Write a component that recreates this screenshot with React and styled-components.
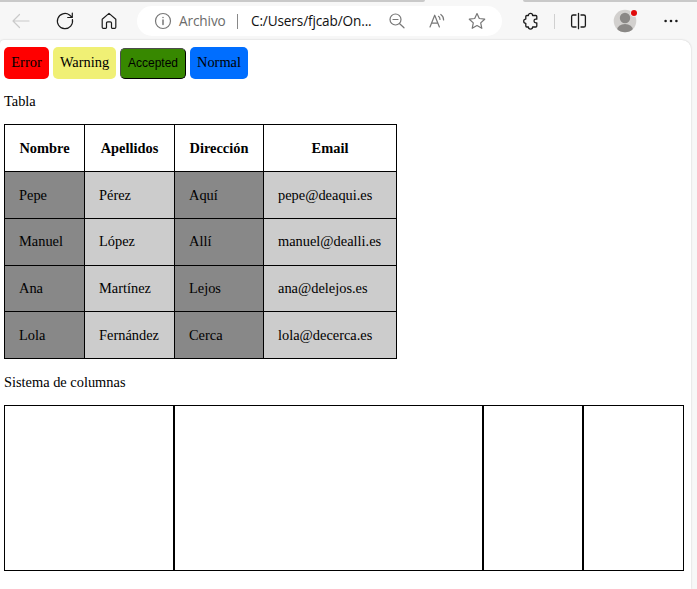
import React from "react";
import styled, { createGlobalStyle } from "styled-components";

const GlobalStyle = createGlobalStyle`
  * { box-sizing: border-box; }
  body { margin: 0; background: #f7f7f7; overflow: hidden; }
`;

const Window = styled.div`
  display: flex;
  flex-direction: column;
  width: 697px;
  height: 589px;
  background: #f7f7f7;
  overflow: hidden;
`;

const TabStrip = styled.div`
  display: flex;
  justify-content: space-between;
  height: 2px;
  flex: none;
`;

const InactiveTabs = styled.div`
  width: ${(p) => p.$width}px;
  background: #c9c9c9;
  border-radius: ${(p) => (p.$side === "left" ? "0 0 2px 0" : "0 0 0 2px")};
`;

const Toolbar = styled.header`
  display: flex;
  align-items: center;
  height: 38px;
  flex: none;
`;

const Icon = styled.svg`
  display: block;
  flex: none;
  width: 20px;
  height: 20px;
  margin-left: ${(p) => p.$gap || 0}px;
  fill: none;
  stroke: ${(p) => p.$color || "#1b1b1b"};
  stroke-width: ${(p) => p.$weight || 1.2};
  stroke-linecap: round;
  stroke-linejoin: round;
`;

const AddressBar = styled.div`
  display: flex;
  align-items: center;
  width: 365px;
  height: 30px;
  margin-left: 18px;
  border-radius: 15px;
  background: #fff;
  font: 13.6px/20px "Open Sans", "Noto Sans", sans-serif;
`;

const Scheme = styled.span`
  width: 58px;
  margin-left: 6px;
  color: #6b6b6b;
  letter-spacing: -0.1px;
  white-space: nowrap;
`;

const Address = styled.span`
  width: 123px;
  margin-left: 13px;
  color: #111;
  letter-spacing: -0.13px;
  white-space: nowrap;
`;

const Divider = styled.span`
  flex: none;
  width: 1px;
  height: 15px;
  margin-left: ${(p) => p.$gap || 0}px;
  background: ${(p) => p.$color};
`;

const Avatar = styled.svg`
  display: block;
  flex: none;
  width: 26px;
  height: 26px;
  margin-left: 24px;
`;

const Page = styled.main`
  width: 691px;
  flex: 1;
  padding: 7px 0 0 4px;
  border-top-left-radius: 4px;
  border-top-right-radius: 9px;
  background: #fff;
  box-shadow: 0 0 2px rgba(0, 0, 0, 0.2);
  color: #000;
  font: 14.4px/17px "Liberation Serif", "Times New Roman", serif;
`;

const Labels = styled.div`
  display: flex;
  align-items: flex-end;
  gap: 4px;
  height: 32px;
`;

const Label = styled.span`
  width: ${(p) => p.$width}px;
  height: 32px;
  padding-top: 7px;
  border-radius: 5px;
  background: ${(p) => p.$color};
  text-align: center;
`;

const AcceptedButton = styled.button`
  width: 66px;
  height: 31px;
  padding: 0 0 2px;
  border: 1px solid;
  border-color: #4c4c4c #000 #000 #4c4c4c;
  border-radius: 5px;
  background: #378800;
  color: #000;
  font: 12px/14px "Liberation Sans", Arial, sans-serif;
`;

const Heading = styled.p`
  height: 17px;
  margin: ${(p) => p.$top}px 0 14px;
`;

const Table = styled.table`
  width: 393px;
  table-layout: fixed;
  border-collapse: separate;
  border-spacing: 0;
  border: solid #000;
  border-width: 1px 0 0 1px;
`;

const Column = styled.col`
  width: ${(p) => p.$width}px;
`;

const Row = styled.tr`
  height: ${(p) => p.$height}px;
`;

const HeaderCell = styled.th`
  padding: 1px 0 0;
  border: solid #000;
  border-width: 0 1px 1px 0;
  font-weight: bold;
  text-align: center;
`;

const Cell = styled.td`
  padding: 14px 0 0 14px;
  border: solid #000;
  border-width: 0 1px 1px 0;
  vertical-align: top;

  tr:first-child > &, tr:last-child > & { padding-top: 15px; }
  &:nth-child(odd) { background: #888; }
  &:nth-child(even) { background: #ccc; }
`;

const Columns = styled.section`
  display: flex;
  height: 166px;
`;

const ColumnBox = styled.div`
  width: ${(p) => p.$width}px;
  border: 1px solid #000;
`;

const people = [
  ["Pepe", "Pérez", "Aquí", "pepe@deaqui.es", 47],
  ["Manuel", "López", "Allí", "manuel@dealli.es", 47],
  ["Ana", "Martínez", "Lejos", "ana@delejos.es", 46],
  ["Lola", "Fernández", "Cerca", "lola@decerca.es", 47],
];

function BrowserBar() {
  return (
    <Toolbar>
      <Icon $gap={11} $color="#cacaca" viewBox="0 0 20 20">
        <path d="M18 10H2M8.5 3.5 2 10l6.5 6.5" />
      </Icon>
      <Icon $gap={24} viewBox="0 0 20 20">
        <path d="M17.4 8.5A7.6 7.6 0 1 1 14.5 4L17 6.2M17.3 2v4.5h-4.6" />
      </Icon>
      <Icon $gap={24} viewBox="0 0 20 20">
        <path d="M3.2 8.2 10 2.4l6.8 5.8v8c0 .7-.4 1.1-1.1 1.1h-2.4c-.5 0-.8-.3-.8-.8V12c0-.7-.5-1.2-1.2-1.2H8.7c-.7 0-1.2.5-1.2 1.2v4.5c0 .5-.3.8-.8.8H4.3c-.7 0-1.1-.4-1.1-1.1z" />
      </Icon>
      <AddressBar>
        <Icon $gap={16} $color="#777" viewBox="0 0 20 20">
          <circle cx="10" cy="10" r="7.5" />
          <path d="M10 9v4.5M10 6.4v.2" strokeWidth="1.5" />
        </Icon>
        <Scheme>Archivo</Scheme>
        <Divider $color="#888" />
        <Address>C:/Users/fjcab/On...</Address>
        <Icon $gap={13} $color="#777" viewBox="0 0 20 20">
          <circle cx="8.5" cy="8.5" r="5.5" />
          <path d="M6 8.5h5M12.7 12.7l4.3 4.1" />
        </Icon>
        <Icon $gap={20} $color="#777" viewBox="0 0 20 20">
          <path d="M3 16 7.7 4.2 12.4 16M4.6 12.2h6.2M11.5 5.3c1 .7 1.5 1.8 1.5 3.2M13.8 3.5c1.8 1.2 2.8 3 2.8 5.4" />
        </Icon>
        <Icon $gap={20} $color="#777" viewBox="0 0 20 20">
          <path d="m10 2.5 2.3 5 5.4.7-4 3.7 1.1 5.4-4.8-2.7-4.8 2.7 1.1-5.4-4-3.7 5.4-.7z" />
        </Icon>
      </AddressBar>
      <Icon $gap={19} $weight={1.3} viewBox="0 0 20 20">
        <path d="M5.8 4.5h1.6a2.1 2.1 0 0 1 4.2 0h3.2c.6 0 1 .4 1 1v2.7h-1a1.8 1.8 0 0 0 0 3.6h1v3.2c0 .6-.4 1-1 1h-3.2a2.1 2.1 0 0 1-4.2 0H5.8c-.6 0-1-.4-1-1v-2.7a2.1 2.1 0 0 1 0-4.2V5.5c0-.6.4-1 1-1z" />
      </Icon>
      <Divider $gap={13} $color="#d0d0d0" />
      <Icon $gap={14} $weight={1.3} viewBox="0 0 20 20">
        <path d="M7 4H4.2C3.3 4 2.6 4.7 2.6 5.6v8.8c0 .9.7 1.6 1.6 1.6H7M12 4h2.8c.9 0 1.6.7 1.6 1.6v8.8c0 .9-.7 1.6-1.6 1.6H12M9.5 2.3v15.4" />
      </Icon>
      <Avatar viewBox="0 0 26 26">
        <defs>
          <clipPath id="avatar-circle"><circle cx="12" cy="13" r="11.3" /></clipPath>
        </defs>
        <circle cx="12" cy="13" r="11.3" fill="#d2d0ce" />
        <g clipPath="url(#avatar-circle)" fill="#8a8886">
          <circle cx="12" cy="10" r="5.2" />
          <ellipse cx="12" cy="22" rx="8" ry="6" />
        </g>
        <circle cx="21" cy="5" r="3.7" fill="#f7f7f7" />
        <circle cx="21" cy="5" r="3" fill="#e00b0b" />
      </Avatar>
      <Icon $gap={22} viewBox="0 0 20 20">
        <g fill="#1b1b1b" stroke="none">
          <circle cx="4.6" cy="10" r="1.3" />
          <circle cx="10" cy="10" r="1.3" />
          <circle cx="15.4" cy="10" r="1.3" />
        </g>
      </Icon>
    </Toolbar>
  );
}

export default function App() {
  return (
    <>
      <GlobalStyle />
      <Window>
        <TabStrip>
          <InactiveTabs $width={425} $side="left" />
          <InactiveTabs $width={174} $side="right" />
        </TabStrip>
        <BrowserBar />
        <Page>
          <Labels>
            <Label $width={45} $color="#ff0000">Error</Label>
            <Label $width={63} $color="#f0f075">Warning</Label>
            <AcceptedButton>Accepted</AcceptedButton>
            <Label $width={58} $color="#006eff">Normal</Label>
          </Labels>
          <Heading $top={14}>Tabla</Heading>
          <Table>
            <colgroup>
              <Column $width={80} />
              <Column $width={90} />
              <Column $width={89} />
              <Column $width={133} />
            </colgroup>
            <thead>
              <Row $height={47}>
                <HeaderCell>Nombre</HeaderCell>
                <HeaderCell>Apellidos</HeaderCell>
                <HeaderCell>Dirección</HeaderCell>
                <HeaderCell>Email</HeaderCell>
              </Row>
            </thead>
            <tbody>
              {people.map(([name, surname, place, email, height]) => (
                <Row key={name} $height={height}>
                  <Cell>{name}</Cell>
                  <Cell>{surname}</Cell>
                  <Cell>{place}</Cell>
                  <Cell>{email}</Cell>
                </Row>
              ))}
            </tbody>
          </Table>
          <Heading $top={15}>Sistema de columnas</Heading>
          <Columns>
            <ColumnBox $width={170} />
            <ColumnBox $width={309} />
            <ColumnBox $width={100} />
            <ColumnBox $width={101} />
          </Columns>
        </Page>
      </Window>
    </>
  );
}
